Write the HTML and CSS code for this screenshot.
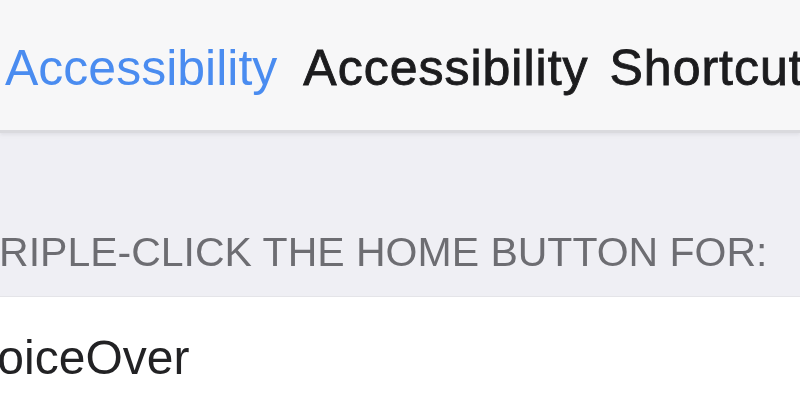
FILE: index.html
```html
<!DOCTYPE html>
<html lang="en">
<head>
<meta charset="utf-8">
<title>Accessibility Shortcut</title>
<link rel="stylesheet" href="styles.css">
</head>
<body>
  <div class="screen">
    <header class="navbar">
      <a class="back" href="#">Accessibility</a>
      <h1 class="title">Accessibility Shortcut</h1>
    </header>
    <section class="group">
      <h2 class="group-header">TRIPLE-CLICK THE HOME BUTTON FOR:</h2>
    </section>
    <ul class="list">
      <li class="cell">VoiceOver</li>
    </ul>
  </div>
</body>
</html>
```

FILE: styles.css
```css
* {
  box-sizing: border-box;
}

html,
body {
  margin: 0;
  padding: 0;
  width: 800px;
  height: 400px;
  overflow: hidden;
  background: #ffffff;
}

.screen {
  width: 800px;
  height: 400px;
  font-family: "Liberation Sans", Arial, sans-serif;
  filter: blur(0.6px);
}

/* Navigation bar */
.navbar {
  height: 133px;
  background: #f7f7f8;
  border-bottom: 3px solid #dadade;
  box-shadow: 0 2px 3px rgba(200, 200, 206, 0.35);
  display: flex;
  align-items: baseline;
  gap: 26px;
  padding: 43px 0 0 5px;
  white-space: nowrap;
  overflow: hidden;
  position: relative;
  z-index: 1;
}

.back {
  font-size: 50px;
  line-height: 50px;
  color: #4a8cf0;
  text-decoration: none;
}

.title {
  margin: 0;
  font-size: 50px;
  line-height: 50px;
  font-weight: 400;
  letter-spacing: 1px;
  word-spacing: 6px;
  color: #1c1c1e;
  -webkit-text-stroke: 0.9px #1c1c1e;
}

/* Grouped section header */
.group {
  height: 164px;
  background: #efeff4;
  border-bottom: 1px solid #e4e4e8;
  padding-top: 99px;
}

.group-header {
  margin: 0;
  font-size: 41px;
  line-height: 41px;
  font-weight: 400;
  color: #6d6d72;
  text-indent: -26px;
  white-space: nowrap;
}

/* Table cells */
.list {
  list-style: none;
  margin: 0;
  padding: 0;
  background: #ffffff;
}

.cell {
  padding-top: 37px;
  font-size: 48px;
  line-height: 48px;
  color: #222224;
  text-indent: -32px;
  white-space: nowrap;
}
```
